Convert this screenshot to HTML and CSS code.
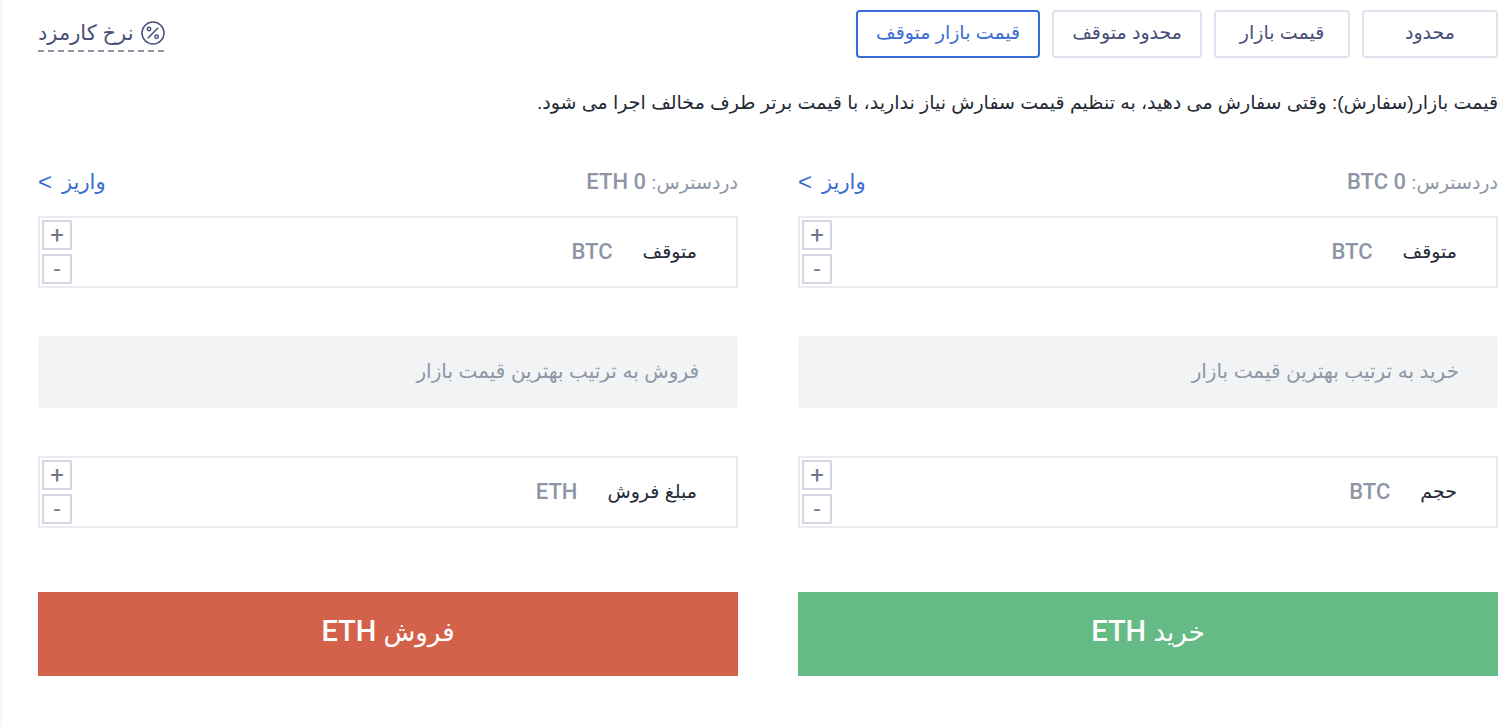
FILE: index.html
```html
<!DOCTYPE html>
<html lang="fa" dir="rtl">
<head>
<meta charset="utf-8">
<meta name="viewport" content="width=device-width, initial-scale=1">
<title>ETH/BTC</title>
<link rel="stylesheet" href="styles.css">
</head>
<body>
<main class="panel">
  <header class="topbar">
    <nav class="tabs">
      <button type="button" class="tab">محدود</button>
      <button type="button" class="tab">قیمت بازار</button>
      <button type="button" class="tab">محدود متوقف</button>
      <button type="button" class="tab tab-active">قیمت بازار متوقف</button>
    </nav>
    <a class="fee" href="#">
      <svg class="fee-icon" viewBox="0 0 24 24" aria-hidden="true">
        <circle cx="12" cy="12" r="11"/>
        <path d="M17.2 6.8 6.8 17.2"/>
        <circle cx="8" cy="8" r="1.7"/>
        <circle cx="15.6" cy="15.8" r="1.7"/>
      </svg>
      <span>نرخ کارمزد</span>
    </a>
  </header>
  <p class="hint">قیمت بازار(سفارش): وقتی سفارش می دهید، به تنظیم قیمت سفارش نیاز ندارید، با قیمت برتر طرف مخالف اجرا می شود.</p>
  <div class="forms">
    <form class="form">
      <div class="balance">
        <span class="available">دردسترس: <span class="latin">0 BTC</span></span>
        <a class="deposit" href="#"><span>واریز</span><span class="arrow">&gt;</span></a>
      </div>
      <div class="field">
        <label class="field-label" for="buy-stop">متوقف</label>
        <span class="unit latin">BTC</span>
        <input class="field-input" id="buy-stop" type="text">
        <span class="stepper"><button type="button" class="step">+</button><button type="button" class="step">-</button></span>
      </div>
      <input class="market" type="text" aria-label="قیمت خرید" value="خرید به ترتیب بهترین قیمت بازار" disabled>
      <div class="field">
        <label class="field-label" for="buy-amount">حجم</label>
        <span class="unit latin">BTC</span>
        <input class="field-input" id="buy-amount" type="text">
        <span class="stepper"><button type="button" class="step">+</button><button type="button" class="step">-</button></span>
      </div>
      <button type="button" class="submit submit-buy">خرید <span class="latin">ETH</span></button>
    </form>
    <form class="form">
      <div class="balance">
        <span class="available">دردسترس: <span class="latin">0 ETH</span></span>
        <a class="deposit" href="#"><span>واریز</span><span class="arrow">&gt;</span></a>
      </div>
      <div class="field">
        <label class="field-label" for="sell-stop">متوقف</label>
        <span class="unit latin">BTC</span>
        <input class="field-input" id="sell-stop" type="text">
        <span class="stepper"><button type="button" class="step">+</button><button type="button" class="step">-</button></span>
      </div>
      <input class="market" type="text" aria-label="قیمت فروش" value="فروش به ترتیب بهترین قیمت بازار" disabled>
      <div class="field">
        <label class="field-label" for="sell-amount">مبلغ فروش</label>
        <span class="unit latin">ETH</span>
        <input class="field-input" id="sell-amount" type="text">
        <span class="stepper"><button type="button" class="step">+</button><button type="button" class="step">-</button></span>
      </div>
      <button type="button" class="submit submit-sell">فروش <span class="latin">ETH</span></button>
    </form>
  </div>
</main>
</body>
</html>
```
FILE: styles.css
```css
* { box-sizing: border-box; }
body {
  margin: 0;
  background: #fff;
  color: #252a36;
  font: 19px/32px "Liberation Sans", "DejaVu Sans", sans-serif;
}
button, input { font: inherit; color: inherit; margin: 0; }
a { text-decoration: none; }
.latin { font-family: Roboto, sans-serif; font-weight: 500; font-size: 22px; }
.panel {
  min-height: 100vh;
  padding: 10px 14px 48px 36px;
  border-left: 2px solid #f5f6fc;
}
.topbar { display: flex; justify-content: space-between; align-items: flex-start; }
.tabs { display: flex; gap: 12px; }
.tab {
  min-width: 136px;
  height: 48px;
  padding: 0 18px 2px;
  border: 2px solid #dfe2ed;
  border-radius: 4px;
  background: #fff;
  color: #484f78;
  white-space: nowrap;
}
.tab-active { border-color: #386dd2; color: #386dd2; }
.fee {
  display: flex;
  align-items: center;
  gap: 7px;
  height: 42px;
  padding-top: 4px;
  color: #484f78;
  font-size: 21px;
  background: repeating-linear-gradient(to right, #8d95a6 0 6px, transparent 6px 10px) left bottom / 100% 2px no-repeat;
}
.fee-icon { width: 24px; height: 24px; fill: none; stroke: currentColor; stroke-width: 1.5; }
.hint { margin: 29px 0 0; }
.forms { display: grid; grid-template-columns: 1fr 1fr; gap: 60px; margin-top: 47px; }
.form { display: flex; flex-direction: column; gap: 48px; min-width: 0; }
.balance {
  display: flex;
  justify-content: space-between;
  align-items: center;
  height: 32px;
  margin-bottom: -30px;
}
.available { color: #8e96a6; }
.deposit { display: flex; gap: 10px; color: #386dd2; font-size: 21px; }
.arrow { font-size: 24px; }
.field {
  display: flex;
  align-items: center;
  height: 72px;
  padding: 0 39px 0 2px;
  border: 2px solid #e8ebf0;
}
.field-label { white-space: nowrap; }
.unit { margin-right: 30px; color: #8e96a6; }
.field-input { flex: 1; min-width: 0; height: 60px; padding: 0 16px; border: 0; outline: 0; background: none; }
.stepper { display: flex; flex-direction: column; gap: 4px; }
.step {
  width: 30px;
  height: 30px;
  padding: 0;
  border: 2px solid #d3d6e2;
  background: #fff;
  color: #74758c;
  font: 24px/26px Roboto, sans-serif;
}
.market {
  height: 72px;
  width: 100%;
  padding: 0 39px 2px;
  border: 0;
  border-radius: 4px;
  background: #f2f3f5;
  color: #8e96a6;
  font-size: 20px;
}
.submit {
  height: 84px;
  margin-top: 16px;
  padding: 0 6px 6px;
  border: 0;
  color: #fff;
  font-size: 26px;
}
.submit .latin { font-size: 29px; }
.submit-buy { background: #65bb85; }
.submit-sell { background: #d46149; }
```
